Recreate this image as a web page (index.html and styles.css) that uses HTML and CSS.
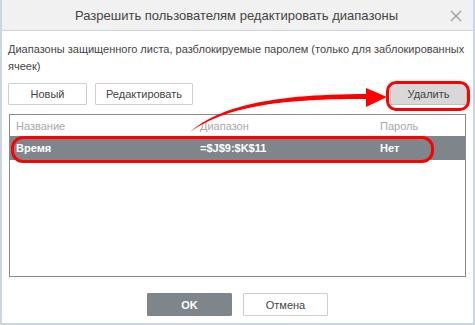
FILE: index.html
```html
<!DOCTYPE html>
<html lang="ru">
<head>
  <meta charset="UTF-8">
  <title>Разрешить пользователям редактировать диапазоны</title>
  <link rel="stylesheet" href="styles.css">
</head>
<body>

<div class="dialog">
  <div class="header">
    <div class="title">Разрешить пользователям редактировать диапазоны</div>
    <svg class="close" width="12" height="12" viewBox="0 0 12 12">
      <path d="M1 1 L11 11 M11 1 L1 11" stroke="#9a9a9a" stroke-width="1.2" fill="none"/>
    </svg>
  </div>

  <div class="content">
    <p class="info">Диапазоны защищенного листа, разблокируемые паролем (только для заблокированных ячеек)</p>

    <div class="toolbar">
      <button class="btn">Новый</button>
      <button class="btn">Редактировать</button>
      <button class="btn btn-delete">Удалить</button>
    </div>

    <div class="list">
      <div class="list-head">
        <span>Название</span>
        <span>Диапазон</span>
        <span>Пароль</span>
      </div>
      <div class="list-row selected">
        <span>Время</span>
        <span>=$J$9:$K$11</span>
        <span>Нет</span>
      </div>
    </div>
  </div>

  <div class="footer">
    <button class="btn btn-ok">OK</button>
    <button class="btn btn-cancel">Отмена</button>
  </div>

  <!-- annotation overlay -->
  <div class="mark mark-row"></div>
  <div class="mark mark-delete"></div>
  <svg class="arrow" width="475" height="325" viewBox="0 0 475 325">
    <path d="M190 132 C216 110 260 94 368 94 L368 99 C262 98 219 112 190 132 Z" fill="#f00"/>
    <polygon points="366,88 387,97 366,107" fill="#f00"/>
  </svg>
</div>

</body>
</html>
```

FILE: styles.css
```css
* {
  margin: 0;
  padding: 0;
  box-sizing: border-box;
}

body {
  font-family: "Liberation Sans", Arial, sans-serif;
  font-size: 11px;
  color: #444;
  background: #fff;
}

.dialog {
  position: relative;
  width: 475px;
  height: 325px;
  border: 2px solid #cbd6e2;
  border-top: none;
  display: flex;
  flex-direction: column;
}

.header {
  position: relative;
  height: 31px;
  background-color: #f1f1f1;
  border-bottom: 1px solid #cfd4da;
  display: flex;
  align-items: center;
  justify-content: center;
}

.title {
  font-size: 13px;
  color: #444;
  padding-right: 2px;
}

.close {
  position: absolute;
  right: 11px;
  top: 10px;
}

.content {
  padding: 10px 6px 0 6px;
}

.info {
  line-height: 17px;
}

.toolbar {
  display: flex;
  gap: 8px;
  margin-top: 8px;
}

.btn {
  font-family: "Liberation Sans", Arial, sans-serif;
  font-size: 11px;
  color: #444;
  background: #fff;
  border: 1px solid #cfcfcf;
  border-radius: 1px;
  height: 22px;
  padding: 0 10px;
}

.toolbar .btn:first-child {
  width: 79px;
}

.toolbar .btn:nth-child(2) {
  width: 98px;
}

.btn-delete {
  margin-left: auto;
  width: 77px;
  background-color: #d8d8d8;
  border-color: #c2c2c2;
}

.list {
  margin: 9px 1px 0 1px;
  height: 163px;
  border: 1px solid #8a8a8a;
}

.list-head, .list-row {
  display: grid;
  grid-template-columns: 184px 180px auto;
  padding-left: 6px;
  align-items: center;
}

.list-head {
  height: 21px;
  color: #a8a8a8;
}

.list-row {
  height: 24px;
}

.selected {
  background-color: #7e868c;
  color: #fff;
  font-weight: bold;
}

.footer {
  margin-top: auto;
  margin-bottom: 7px;
  display: flex;
  justify-content: center;
  gap: 11px;
}

.footer .btn {
  width: 85px;
  height: 23px;
}

.btn-ok {
  background-color: #7e868c;
  border-color: #7e868c;
  color: #fff;
  font-weight: bold;
}

.mark {
  position: absolute;
  border: 3px solid #f00;
  border-radius: 12px;
}

.mark-row {
  left: 9px;
  top: 136px;
  width: 423px;
  height: 27px;
}

.mark-delete {
  left: 384px;
  top: 81px;
  width: 84px;
  height: 30px;
  border-radius: 10px;
}

.arrow {
  position: absolute;
  left: -2px;
  top: 0;
  pointer-events: none;
}
```
